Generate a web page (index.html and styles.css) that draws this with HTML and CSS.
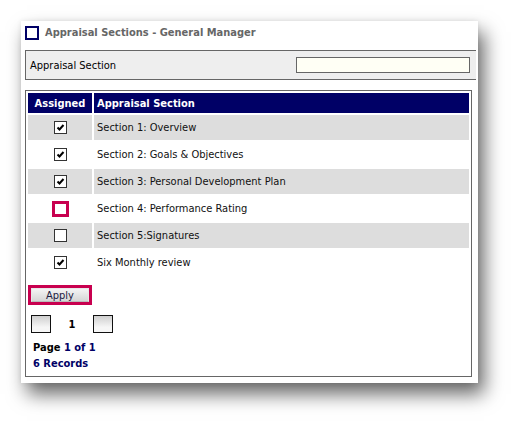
FILE: index.html
```html
<!DOCTYPE html>
<html>
<head>
<meta charset="utf-8">
<link rel="stylesheet" href="styles.css">
</head>
<body>
<div class="card">
  <div class="title">
    <span class="title-icon"></span>
    <span class="title-text">Appraisal Sections - General Manager</span>
  </div>
  <div class="filter">
    <span class="filter-label">Appraisal Section</span>
    <span class="filter-input"></span>
  </div>
  <div class="panel">
    <table class="grid">
      <thead>
        <tr><th class="col-assigned">Assigned</th><th class="col-section">Appraisal Section</th></tr>
      </thead>
      <tbody>
        <tr class="alt"><td class="cb-cell"><span class="cb"><svg viewBox="0 0 11 11"><path d="M2.5 5.5 L4.5 7.5 L8.5 3" /></svg></span></td><td>Section 1: Overview</td></tr>
        <tr><td class="cb-cell"><span class="cb"><svg viewBox="0 0 11 11"><path d="M2.5 5.5 L4.5 7.5 L8.5 3" /></svg></span></td><td>Section 2: Goals &amp; Objectives</td></tr>
        <tr class="alt"><td class="cb-cell"><span class="cb"><svg viewBox="0 0 11 11"><path d="M2.5 5.5 L4.5 7.5 L8.5 3" /></svg></span></td><td>Section 3: Personal Development Plan</td></tr>
        <tr><td class="cb-cell"><span class="cb cb-focus"></span></td><td>Section 4: Performance Rating</td></tr>
        <tr class="alt"><td class="cb-cell"><span class="cb"></span></td><td>Section 5:Signatures</td></tr>
        <tr><td class="cb-cell"><span class="cb"><svg viewBox="0 0 11 11"><path d="M2.5 5.5 L4.5 7.5 L8.5 3" /></svg></span></td><td>Six Monthly review</td></tr>
      </tbody>
    </table>
    <div class="apply-wrap"><span class="apply">Apply</span></div>
    <div class="pager">
      <span class="pbtn"></span>
      <span class="pnum">1</span>
      <span class="pbtn"></span>
    </div>
    <div class="info info-first">Page <span class="num">1 of 1</span></div>
    <div class="info num">6 Records</div>
  </div>
</div>
</body>
</html>
```
FILE: styles.css
```css
html, body {
  margin: 0;
  padding: 0;
  background: #ffffff;
}
body {
  font-family: "DejaVu Sans Condensed", "Liberation Sans", sans-serif;
  font-size: 11px;
  color: #000;
  min-height: 426px;
  padding-top: 21px;
  box-sizing: border-box;
}
.card {
  margin: 0 0 0 21px;
  width: 457px;
  height: 362px;
  box-sizing: border-box;
  padding: 4px 2px 0 4px;
  background: #fff;
  box-shadow: 6px 11px 18px rgba(0, 0, 0, 0.6), 0 0 5px rgba(0, 0, 0, 0.08);
}
.title {
  display: flex;
  align-items: center;
  height: 15px;
  gap: 6px;
}
.title-icon {
  width: 14px;
  height: 14px;
  box-sizing: border-box;
  border: 2px solid #000066;
}
.title-text {
  font-weight: bold;
  color: #666666;
  font-size: 11px;
}
.filter {
  margin-top: 10px;
  height: 30px;
  box-sizing: border-box;
  border: 1px solid #666;
  border-right: none;
  background: #eeeeee;
  display: flex;
  align-items: center;
  justify-content: space-between;
  padding: 0 6px 0 4px;
}
.filter-input {
  width: 174px;
  height: 16px;
  box-sizing: border-box;
  border: 1px solid #666;
  background: #fffff5;
}
.panel {
  margin-top: 10px;
  width: 447px;
  height: 287px;
  box-sizing: border-box;
  border: 1px solid #666;
}
.grid {
  width: 100%;
  border-collapse: separate;
  border-spacing: 2px;
}
.grid th {
  background: #000066;
  color: #fff;
  font-weight: bold;
  height: 20px;
  padding: 0 3px;
  text-align: left;
}
.grid th.col-assigned {
  width: 58px;
  text-align: center;
}
.grid td {
  height: 25px;
  padding: 0 3px;
  color: #111;
}
.grid tr.alt td {
  background: #dddddd;
}
.cb-cell {
  text-align: center;
}
.cb {
  display: inline-block;
  vertical-align: middle;
  width: 13px;
  height: 13px;
  box-sizing: border-box;
  border: 1px solid #333;
  background: #fff;
}
.cb svg {
  display: block;
  width: 11px;
  height: 11px;
}
.cb svg path {
  fill: none;
  stroke: #000;
  stroke-width: 2;
}
.cb.cb-focus {
  width: 17px;
  height: 16px;
  border: 3px solid #c8004f;
}
.apply-wrap {
  margin: 8px 0 0 2px;
  width: 64px;
  height: 20px;
  box-sizing: border-box;
  border: 3px solid #c8004f;
}
.apply {
  display: block;
  height: 14px;
  line-height: 13px;
  text-align: center;
  color: #1a1a40;
  background: linear-gradient(#f4f4f4, #d6d6d6);
  border: 1px solid #e8e8e8;
  border-bottom-color: #bbb;
  box-sizing: border-box;
  font-size: 11px;
}
.pager {
  display: flex;
  align-items: center;
  margin: 10px 0 0 5px;
  height: 18px;
}
.pbtn {
  width: 20px;
  height: 18px;
  box-sizing: border-box;
  border: 1px solid #111;
  background: linear-gradient(#cfcfcf, #f6f6f6 70%);
}
.pnum {
  width: 42px;
  text-align: center;
  font-weight: bold;
}
.info {
  margin-left: 7px;
  font-weight: bold;
  line-height: 16px;
}
.info-first {
  margin-top: 7px;
}
.num {
  color: #000066;
}
```
